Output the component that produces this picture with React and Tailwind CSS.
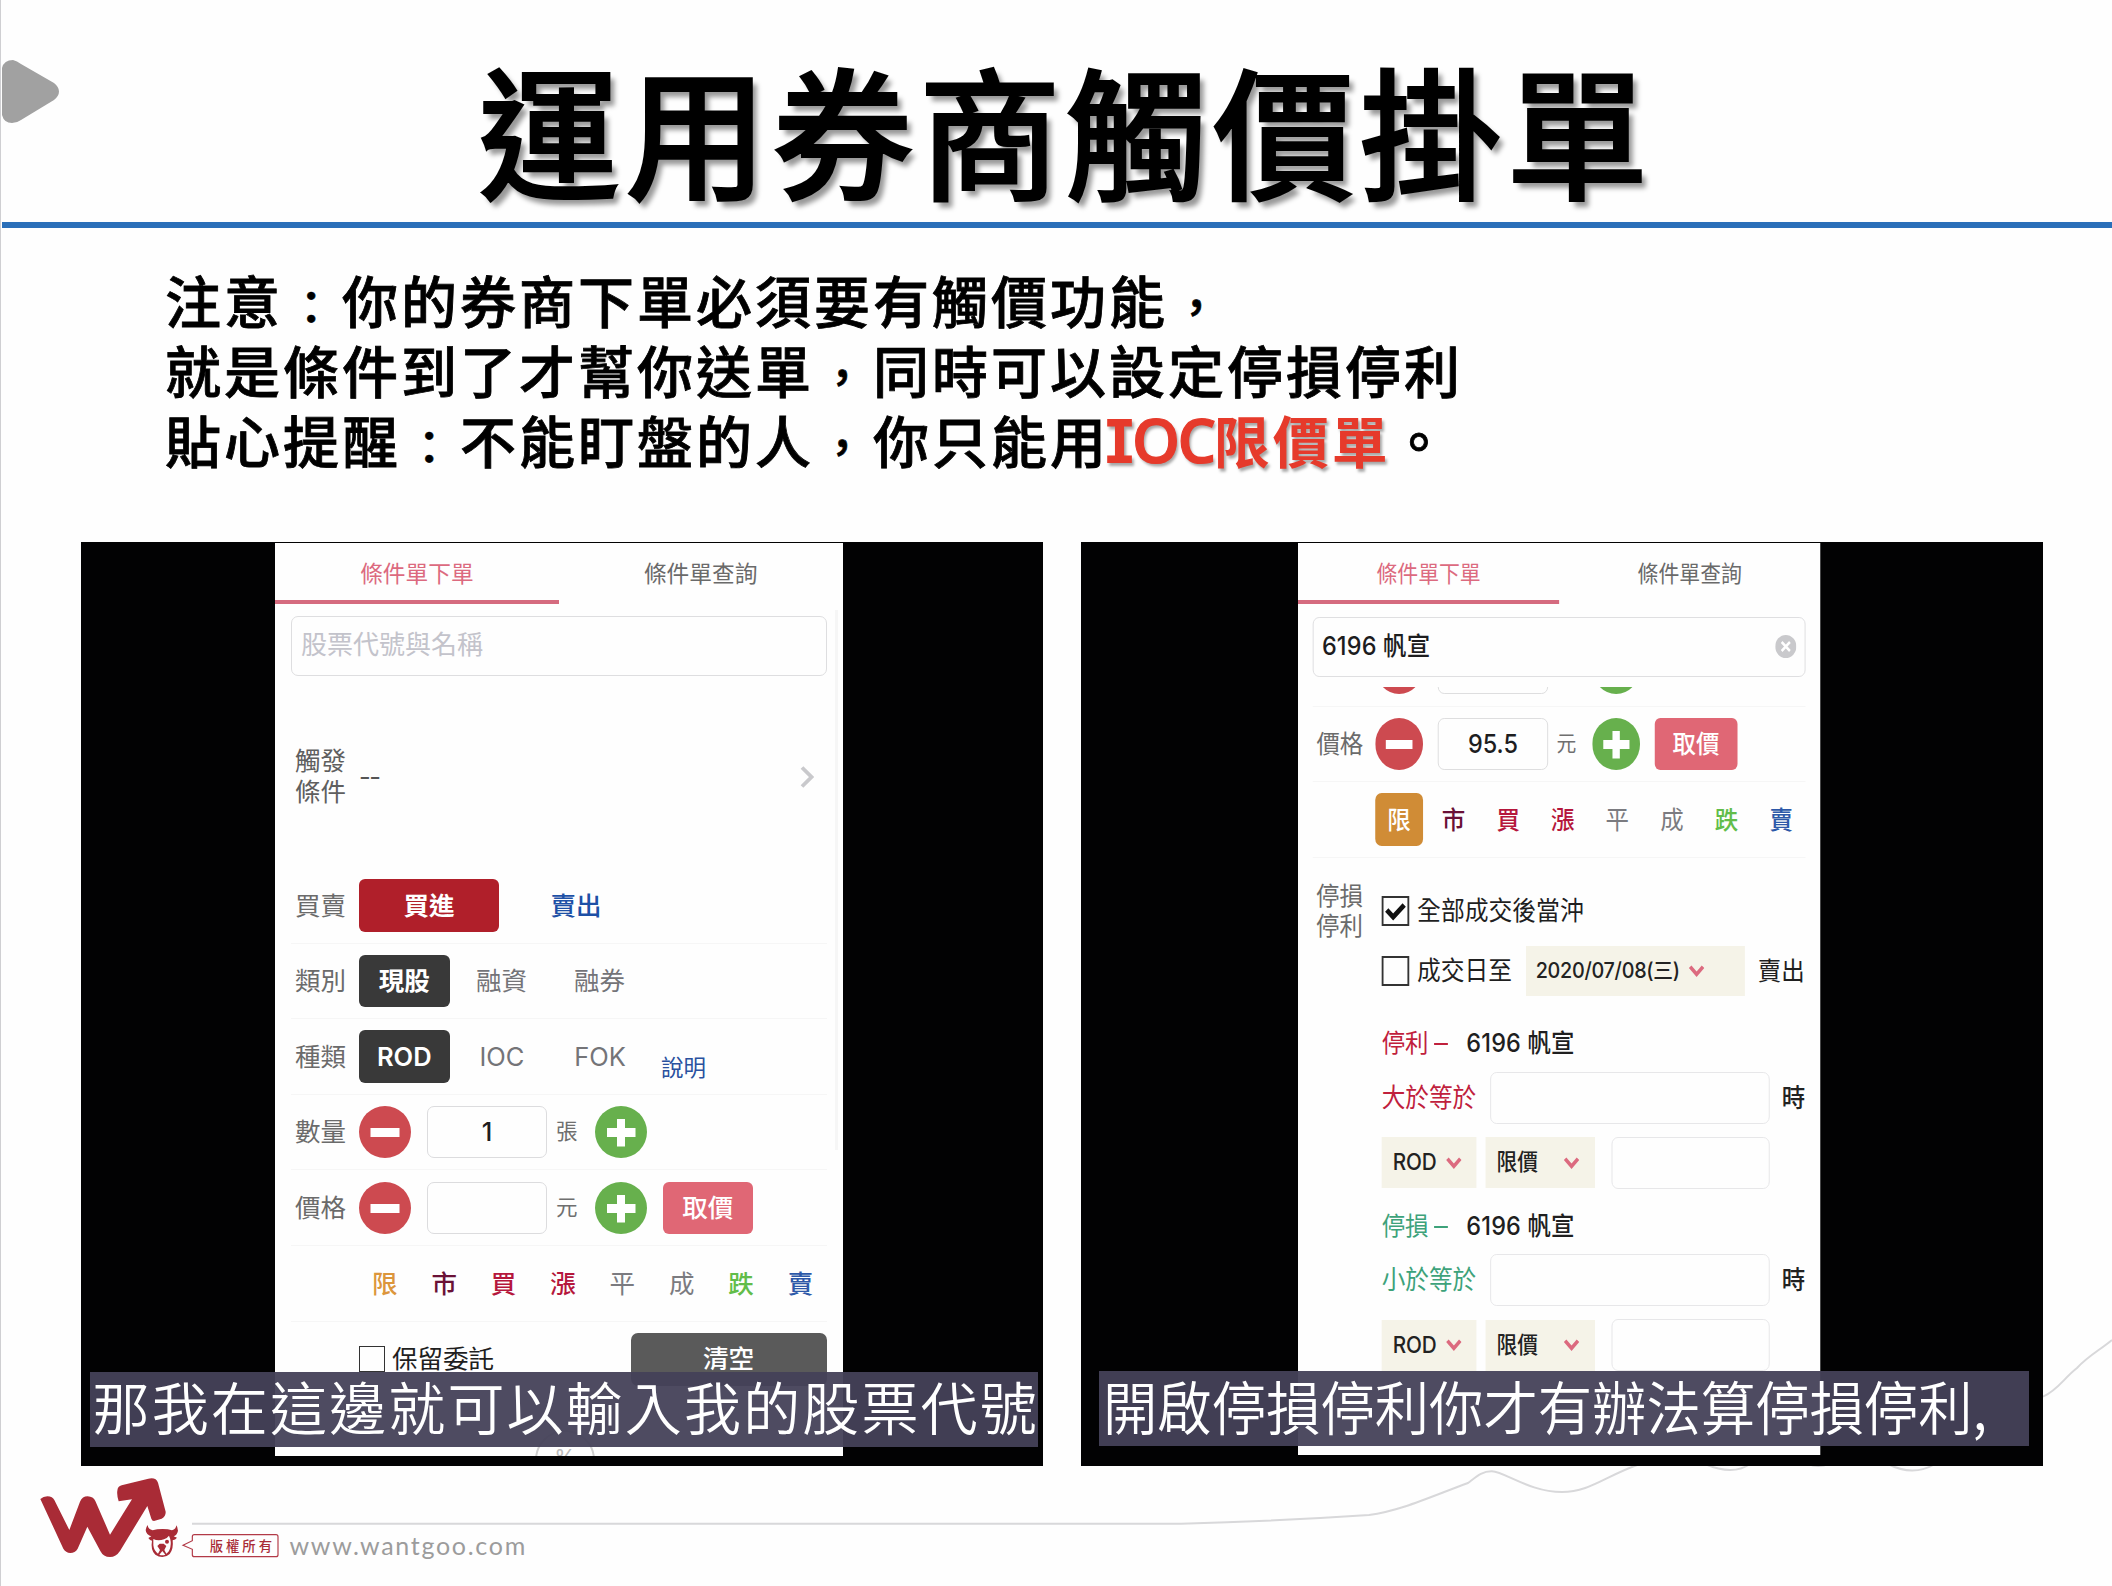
import React from "react";

const Minus = () => (
  <svg viewBox="0 0 52 52" className="h-[52px] w-[52px] shrink-0">
    <circle cx="26" cy="26" r="26" fill="#cd4a50" />
    <rect x="11.5" y="22" width="29" height="9" fill="#fff" />
  </svg>
);

const Plus = () => (
  <svg viewBox="0 0 52 52" className="h-[52px] w-[52px] shrink-0">
    <circle cx="26" cy="26" r="26" fill="#67b04d" />
    <path d="M12 22h10V13h8v9h10.500v9H30v9.500h-8V31H12z" fill="#fff" />
  </svg>
);

const Chevron = () => (
  <svg viewBox="0 0 17 12" className="h-[12px] w-[17px] shrink-0">
    <path d="M1.500 1.800l7 7.400 7-7.400" fill="none" stroke="#dc6a7f" strokeWidth="3.800" />
  </svg>
);

const Tabs = () => (
  <div className="flex h-[61px] shrink-0 text-[22.700px]">
    <div className="flex w-1/2 items-center justify-center border-b-[4.500px] border-[#d56b7f] pt-[5px] text-[#dc6a7f]">
      條件單下單
    </div>
    <div className="flex w-1/2 items-center justify-center pt-px text-[#6a6a6a]">條件單查詢</div>
  </div>
);

const Row = ({ label, children }) => (
  <div className="mx-[16px] flex h-[75.600px] shrink-0 items-center border-b-[1.500px] border-[#f6f6f6]">
    <div className="w-[68px] shrink-0 pl-[4px] text-[#6b6b6b]">{label}</div>
    {children}
  </div>
);

const Stepper = ({ value, unit }) => (
  <>
    <Minus />
    <div className="ml-[16px] flex h-[52px] w-[120px] shrink-0 items-center justify-center rounded-[7px] border-[1.500px] border-[#dcdcde] text-[25.500px] font-medium text-[#1d1d1f]">
      {value}
    </div>
    <div className="ml-[9px] w-[38.500px] shrink-0 text-[21.500px] text-[#6f6f6f]">{unit}</div>
    <Plus />
  </>
);

const FetchPrice = () => (
  <div className="ml-[16px] flex h-[52px] w-[90.500px] items-center justify-center rounded-[6px] bg-[#e06775] font-medium text-white">
    取價
  </div>
);

const Chip = ({ children, className }) => (
  <div className={"flex h-[52.500px] w-[51.500px] shrink-0 items-center justify-center rounded-[7px] " + className}>{children}</div>
);

const Chips = ({ limit }) => (
  <div className="flex gap-[7.900px]">
    <Chip className={limit}>限</Chip>
    <Chip className="font-medium text-[#6a1136]">市</Chip>
    <Chip className="font-medium text-[#b5173c]">買</Chip>
    <Chip className="font-medium text-[#b5173c]">漲</Chip>
    <Chip className="text-[#7b7b80]">平</Chip>
    <Chip className="text-[#7b7b80]">成</Chip>
    <Chip className="font-medium text-[#62bd4a]">跌</Chip>
    <Chip className="font-medium text-[#2c58a8]">賣</Chip>
  </div>
);

const Dark = ({ children }) => (
  <div className="flex h-[52.500px] w-[90.500px] shrink-0 items-center justify-center rounded-[6px] bg-[#393939] font-semibold text-white">
    {children}
  </div>
);

const Soft = ({ children }) => (
  <div className="flex w-[98px] shrink-0 items-center justify-center text-[#747478]">{children}</div>
);

const OrderPhone = () => (
  <div className="relative ml-[194.500px] mt-[1px] flex h-[913px] w-[567.500px] flex-col overflow-hidden bg-[#fefefe] text-[25.500px] leading-none">
    <Tabs />
    <div className="mx-[16px] mt-[12px] flex h-[60px] shrink-0 items-center rounded-[7px] border-[1.500px] border-[#dedee0] pb-[3px] pl-[9px] text-[26px] text-[#c3c3cb]">
      股票代號與名稱
    </div>
    <div className="mx-[16px] flex h-[192px] shrink-0 items-center pt-[9px]">
      <div className="w-[68px] pl-[4px] leading-[30.500px] text-[#5f5f5f]">
        觸發
        <br />
        條件
      </div>
      <div className="grow tracking-[-1.500px] text-[#555]">--</div>
      <svg viewBox="0 0 14 22" className="mr-[12.500px] h-[22px] w-[14px]">
        <path d="M2 1.500l9.500 9.500L2 20.500" fill="none" stroke="#c9c9cc" strokeWidth="3.800" />
      </svg>
    </div>
    <Row label="買賣">
      <div className="flex h-[52.500px] w-[140px] items-center justify-center rounded-[6px] bg-[#b01f2a] font-semibold text-white">
        買進
      </div>
      <div className="ml-[51.500px] font-medium text-[#1d50a6]">賣出</div>
    </Row>
    <Row label="類別">
      <Dark>現股</Dark>
      <div className="ml-[3px] flex">
        <Soft>融資</Soft>
        <Soft>融券</Soft>
      </div>
    </Row>
    <Row label="種類">
      <Dark>ROD</Dark>
      <div className="ml-[3.500px] flex">
        <Soft>IOC</Soft>
        <Soft>FOK</Soft>
      </div>
      <div className="ml-[12px] pt-[23px] text-[22.500px] text-[#2a519f]">說明</div>
    </Row>
    <Row label="數量">
      <Stepper value="1" unit="張" />
    </Row>
    <Row label="價格">
      <Stepper value="" unit="元" />
      <FetchPrice />
    </Row>
    <Row label="">
      <Chips limit="font-medium text-[#dc963c]" />
    </Row>
    <div className="ml-[84px] mr-[16px] mt-[11px] flex h-[53px] shrink-0 items-center">
      <div className="h-[26px] w-[26px] border-[1.500px] border-[#333]" />
      <div className="ml-[7px] text-[#1f1f1f]">保留委託</div>
      <div className="ml-auto flex h-[53px] w-[196px] items-center justify-center rounded-[7px] bg-[#5a5a5a] font-medium text-white">
        清空
      </div>
    </div>
    <div className="ml-[260px] mt-[44px] flex h-[60px] w-[60px] shrink-0 items-start justify-center rounded-full border-[2px] border-[#cfcfcf] pt-[14px] text-[22px] text-[#bbb]">
      %
    </div>
    <div className="absolute right-[5px] top-[67px] h-[540px] w-[3px] bg-[#f6f6f6]" />
  </div>
);

const Target = ({ title, name, rule, color }) => (
  <>
    <div className="mt-[9px] flex h-[40px] items-center first:mt-0">
      <span className={"w-[92px] whitespace-nowrap " + color}>
        {title}
        <i className="mb-[7px] ml-[6px] inline-block h-[2px] w-[15px] bg-current" />
      </span>
      <span className="font-medium tracking-[0.200px] text-[#1f1f1f]">{name}</span>
    </div>
    <div className="mt-[8.500px] flex h-[52px] items-center">
      <span className={"w-[117.500px] whitespace-nowrap text-[25.700px] " + color}>{rule}</span>
      <div className="h-[52px] w-[304.500px] rounded-[7px] border-[1.500px] border-[#e6e6e8]" />
      <span className="ml-[13px] font-medium text-[#222]">時</span>
    </div>
    <div className="mt-[13.500px] flex h-[51px] items-center text-[22.500px] font-medium text-[#222]">
      <div className="flex h-[51px] w-[103px] items-center justify-between bg-[#f5f3e8] pl-[12px] pr-[16px]">
        <span className="tracking-[-0.100px]">ROD</span>
        <Chevron />
      </div>
      <div className="ml-[10px] flex h-[51px] w-[119px] items-center justify-between bg-[#f5f3e8] pl-[12px] pr-[17px]">
        <span>限價</span>
        <Chevron />
      </div>
      <div className="ml-[17.500px] h-[52px] w-[172px] rounded-[7px] border-[1.500px] border-[#e6e6e8]" />
    </div>
  </>
);

const StopPhone = () => (
  <div className="ml-[217px] mt-[1px] flex h-[912px] w-[568px] origin-left scale-x-[0.9195] flex-col overflow-hidden bg-[#fefefe] text-[25.500px] leading-none">
    <Tabs />
    <div className="mx-[16px] mt-[13px] flex h-[59.500px] shrink-0 items-center justify-between rounded-[7px] border-[1.500px] border-[#dedee0] pb-[3px] pl-[9px] pr-[9px] font-medium tracking-[0.200px] text-[#1d1d1f]">
      6196 帆宣
      <svg viewBox="0 0 23 23" className="mt-[3px] h-[23px] w-[23px]">
        <circle cx="11.500" cy="11.500" r="11.500" fill="#c9c9cc" />
        <path d="M7 7l9 9M16 7l-9 9" stroke="#fff" strokeWidth="2.600" />
      </svg>
    </div>
    <div className="mt-[10px] flex h-[20px] shrink-0 flex-col justify-end overflow-hidden">
      <Row label="">
        <Stepper value="" unit="" />
      </Row>
    </div>
    <Row label="價格">
      <Stepper value="95.5" unit="元" />
      <FetchPrice />
    </Row>
    <Row label="">
      <Chips limit="bg-[#d08c36] font-medium text-white" />
    </Row>
    <div className="ml-[19.500px] flex shrink-0 pt-[23.500px]">
      <div className="w-[71.500px] leading-[30px] text-[#6b6b6b]">
        停損
        <br />
        停利
      </div>
      <div className="shrink-0">
        <div className="flex h-[60px] items-center">
          <div className="flex h-[30px] w-[30px] items-center justify-center border-[2px] border-[#333]">
            <svg viewBox="0 0 24 20" className="h-[20px] w-[24px]">
              <path d="M2.500 9l7 7L21.500 4" fill="none" stroke="#111" strokeWidth="5" />
            </svg>
          </div>
          <span className="ml-[8.500px] text-[25.900px] text-[#1f1f1f]">全部成交後當沖</span>
        </div>
        <div className="mt-[5px] flex h-[50px] items-center">
          <div className="h-[30px] w-[30px] border-[2px] border-[#333]" />
          <span className="ml-[8.500px] w-[118px] text-[25.800px] text-[#1f1f1f]">成交日至</span>
          <div className="flex h-[50px] w-[238.500px] items-center bg-[#f5f3e8] pl-[11px] text-[21.500px] font-medium text-[#222]">
            <span className="w-[166px] whitespace-nowrap tracking-[-0.300px]">2020/07/08(三)</span>
            <Chevron />
          </div>
          <span className="ml-[14px] text-[#1f1f1f]">賣出</span>
        </div>
        <div className="h-[18px]" />
        <Target title="停利" name="6196 帆宣" rule="大於等於" color="text-[#c0203c]" />
        <div className="h-[8.500px]" />
        <Target title="停損" name="6196 帆宣" rule="小於等於" color="text-[#3da27a]" />
      </div>
    </div>
  </div>
);

const Logo = () => (
  <svg viewBox="0 0 750 300" className="h-[100px] w-[250px] shrink-0">
    <path
      fill="#a92b36"
      d="M31 87Q40 79 52 79Q68 80 73 90L118 180L150 95Q157 79 173 79Q190 80 196 93L240 194L306 88L266 94Q260 75 262 62Q263 49 275 46L355 26Q378 21 384 38L407 125Q408 140 395 146L372 153Q366 153 364 146L352 108L270 243Q258 261 240 261Q220 261 211 243L172 170L143 236Q135 249 121 249Q107 248 100 236Z"
    />
    <g fill="#a92b36">
      <path d="M353 165Q342 180 352 192Q358 198 364 199L355 204Q360 212 366 212Q361 240 376 254Q386 261 397 261Q410 261 419 252Q431 238 428 211Q436 210 441 203L431 199Q442 194 444 182Q443 171 439 166Q438 178 426 181Q415 177 398 177Q380 177 368 181Q354 178 353 165Z" />
      <path fill="#fefefe" d="M370 207Q384 214 402 208Q412 204 417 197Q425 214 421 232Q418 246 409 251L403 240L409 228L401 221H389L382 228L390 240L384 251Q372 243 370 226Z" />
      <circle cx="411" cy="215" r="6" />
      <path fill="#fefefe" d="M388 254L397 243L406 254Q397 258 388 254Z" />
    </g>
    <path
      fill="#fefefe"
      stroke="#b23a47"
      strokeWidth="3.500"
      d="M459 226L487 212V200Q487 194 493 194H738Q744 194 744 200V254Q744 260 738 260H493Q487 260 487 254V238Z"
    />
    <text x="539" y="244" fontSize="40" fontWeight="500" letterSpacing="9" fill="#a92b36" fontFamily="Noto Sans CJK TC, sans-serif">
      版權所有
    </text>
  </svg>
);

const Mark = ({ children }) => <span className="relative top-[5px] inline-block scale-[0.82]">{children}</span>;

export default function App() {
  return (
    <div className="relative flex h-[1586px] w-[2112px] flex-col overflow-hidden border-l-[1.500px] border-[#cfcfd2] bg-[#fefefe] font-['Inter','Noto_Sans_CJK_TC',sans-serif]">
      <svg viewBox="0 0 2112 1586" className="absolute -left-px top-0 h-[1586px] w-[2112px]" fill="none" stroke="#d8d8da" strokeWidth="2">
        <path d="M192 1523.700H1181Q1280 1521 1369 1515C1400 1511 1430 1497 1468 1483C1476 1477 1482 1471 1492 1471.300C1505 1472 1530 1492 1562 1492C1590 1492 1605 1476 1640 1464M1705 1464Q1733 1476 1750 1464M1808 1464Q1818 1468 1829 1464M1888 1464Q1913 1477 1935 1464M2043 1396.700C2058 1390 2064 1378 2077 1368C2088 1356 2100 1350 2112 1340" />
      </svg>
      <header className="relative flex h-[222px] shrink-0 items-start">
        <svg viewBox="0 0 58 64" className="ml-px mt-[60px] h-[64px] w-[58px]">
          <path d="M0 8Q2 0 11 0Q15 1 19 4L52 23Q57 27 57 31.500Q57 36 52 40L19 60Q15 63 10 63Q2 63 0 55Z" fill="#a1a1a1" />
        </svg>
        <h1 className="ml-[418px] mt-[55px] whitespace-nowrap font-['Noto_Sans_CJK_TC',sans-serif] text-[142px] font-medium leading-[144px] tracking-[4.900px] text-black [-webkit-text-stroke:2px_black] [text-shadow:5px_6px_5px_rgba(0,0,0,0.4)]">
          運用券商觸價掛單
        </h1>
      </header>
      <div className="ml-px h-[6px] shrink-0 bg-[#2a6fb9]" />
      <div className="mt-[36px] h-[278px] shrink-0 whitespace-nowrap pl-[164px] font-['Noto_Sans_CJK_TC',sans-serif] text-[56px] font-medium leading-[70px] tracking-[3px] text-black">
        <p className="h-[70px] [-webkit-text-stroke:0.8px_black]">
          注意<Mark>：</Mark>你的券商下單必須要有觸價功能<Mark>，</Mark>
        </p>
        <p className="h-[70px] [-webkit-text-stroke:0.8px_black]">
          就是條件到了才幫你送單<Mark>，</Mark>同時可以設定停損停利
        </p>
        <p className="flex h-[70px]">
          <span className="[-webkit-text-stroke:0.8px_black]">
            貼心提醒<Mark>：</Mark>不能盯盤的人<Mark>，</Mark>你只能用
          </span>
          <span className="-ml-[4px] font-bold text-[#e63a2b] [text-shadow:2px_3px_3px_rgba(0,0,0,0.35)]">
            <span className="font-['Inter'] text-[61px] font-bold tracking-[-2px] [font-feature-settings:'cv08']">I</span>
            <span className="font-['Open_Sans'] text-[61px] font-semibold tracking-[-2.500px] [-webkit-text-stroke:1.200px_#e63a2b]">OC</span>
            限價單
          </span>
          <span className="[-webkit-text-stroke:0.8px_black]">。</span>
        </p>
      </div>
      <main className="relative flex h-[924px] shrink-0 gap-[38px] pl-[79.500px]">
        <section className="relative w-[962px] overflow-hidden bg-[#020203]">
          <OrderPhone />
          <div className="absolute bottom-[19px] left-[9px] flex h-[75px] w-[948px] items-center bg-[#444159]/95 pb-[9px] pl-[3px]">
            <span className="whitespace-nowrap font-['Noto_Sans_CJK_TC',sans-serif] text-[57px] font-[350] leading-none tracking-[2.150px] text-white">
              那我在這邊就可以輸入我的股票代號
            </span>
          </div>
        </section>
        <section className="relative w-[962px] overflow-hidden bg-[#020203]">
          <StopPhone />
          <div className="absolute bottom-[20px] left-[18.500px] flex h-[75px] w-[930px] items-center bg-[#444159]/95 pb-[8px] pl-[4px]">
            <span className="origin-left scale-x-[0.937] whitespace-nowrap font-['Noto_Sans_CJK_TC',sans-serif] text-[58px] font-[350] leading-none text-white">
              開啟停損停利你才有辦法算停損停利,
            </span>
          </div>
        </section>
      </main>
      <footer className="relative flex h-[104px] shrink-0 items-start pl-[28.500px] pt-[4px]">
        <Logo />
        <span className="ml-[10px] mt-[60px] font-['Lato'] text-[25px] leading-[30px] tracking-[1.700px] text-[#9c9c9c]">www.wantgoo.com</span>
      </footer>
    </div>
  );
}
